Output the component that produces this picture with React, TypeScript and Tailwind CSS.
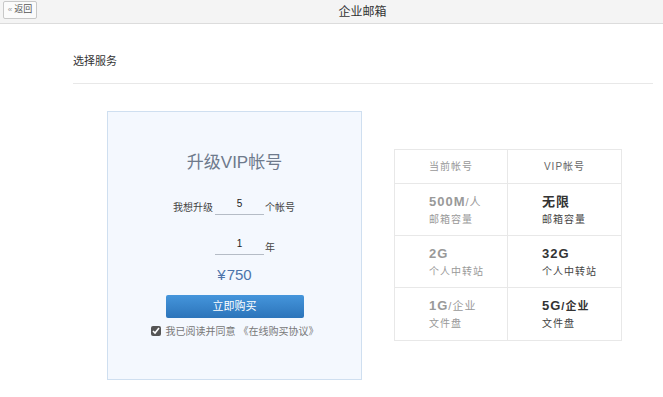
import { useState } from 'react';

const font = {
  fontFamily: '"Liberation Sans", "Noto Sans CJK SC", sans-serif',
};

const rows = [
  { cur: '500M', curUnit: '/人', vip: '无限', vipUnit: '', label: '邮箱容量' },
  { cur: '2G', curUnit: '', vip: '32G', vipUnit: '', label: '个人中转站' },
  { cur: '1G', curUnit: '/企业', vip: '5G', vipUnit: '/企业', label: '文件盘' },
];

export default function App() {
  const [count, setCount] = useState('5');
  const [years, setYears] = useState('1');
  const [agreed, setAgreed] = useState(true);

  return (
    <div className="min-h-[397px] w-full bg-white" style={font}>
      {/* top bar */}
      <div className="relative flex h-[24px] items-center justify-center border-b border-[#dcdcdc] bg-[#f4f4f4]">
        <button className="absolute left-[3px] top-[1px] flex h-[18px] w-[34px] items-center justify-center rounded-[2px] border border-[#c8c8c8] bg-[#fbfbfb] text-[9px] text-[#555]">
          <span className="mr-[2px] text-[8px] text-[#999]">«</span>返回
        </button>
        <span className="ml-[62px] text-[12px] text-[#333]">企业邮箱</span>
      </div>

      <div className="pl-[73px] pr-[10px]">
        <div className="border-b border-[#e8e8e8] pb-[13px] pt-[29px] text-[11px] text-[#333]">
          选择服务
        </div>
      </div>

      <div className="flex items-start pl-[107px] pt-[27px]">
        {/* purchase card */}
        <div className="flex h-[269px] w-[255px] flex-col items-center border border-[#cfdff0] bg-[#f4f8fe]">
          <div className="mt-[39px] text-[17px] leading-[24px] text-[#6e7a8c]">升级VIP帐号</div>

          <div className="mt-[22px] flex w-full flex-col gap-[22px] pl-[65px]">
            <div className="flex items-end text-[10px] text-[#444]">
              <span className="w-[42px] leading-[14px]">我想升级</span>
              <input
                value={count}
                onChange={(e) => setCount(e.target.value)}
                className="h-[18px] w-[49px] border-b border-[#b5bcc6] bg-transparent pb-[4px] text-center text-[10px] text-[#222] outline-none"
              />
              <span className="ml-[1px] leading-[14px]">个帐号</span>
            </div>
            <div className="flex items-end text-[10px] text-[#444]">
              <span className="w-[42px]" />
              <input
                value={years}
                onChange={(e) => setYears(e.target.value)}
                className="h-[18px] w-[49px] border-b border-[#b5bcc6] bg-transparent pb-[4px] text-center text-[10px] text-[#222] outline-none"
              />
              <span className="ml-[1px] leading-[14px]">年</span>
            </div>
          </div>

          <div className="mt-[10px] text-[15px] leading-[20px] text-[#4d74aa]">
            ¥<span className="ml-[1px]">750</span>
          </div>

          <button className="mt-[10px] h-[23px] w-[138px] rounded-[2px] bg-gradient-to-b from-[#4596dc] to-[#2c74ba] text-[11px] text-white">
            立即购买
          </button>

          <label className="mt-[6px] flex items-center text-[10px] text-[#777]">
            <input
              type="checkbox"
              checked={agreed}
              onChange={(e) => setAgreed(e.target.checked)}
              className="mr-[5px] h-[10px] w-[10px] accent-[#555]"
            />
            我已阅读并同意 《在线购买协议》
          </label>
        </div>

        {/* comparison table */}
        <div className="ml-[32px] mt-[38px] w-[228px] border border-[#e8e8e8] tracking-[1px]">
          <div className="flex h-[34px] items-center border-b border-[#e8e8e8] text-[10px]">
            <div className="flex h-full w-[113px] items-center justify-center border-r border-[#e8e8e8] text-[#999]">
              当前帐号
            </div>
            <div className="flex-1 text-center text-[#666]">VIP帐号</div>
          </div>
          {rows.map((r, i) => (
            <div
              key={r.label}
              className={`flex h-[52px] ${i < rows.length - 1 ? 'border-b border-[#e8e8e8]' : ''}`}
            >
              <div className="w-[113px] border-r border-[#e8e8e8] pl-[34px] pt-[9px] text-[#999]">
                <div className="text-[13px] font-bold leading-[18px]">
                  {r.cur}
                  <span className="text-[11px] font-normal">{r.curUnit}</span>
                </div>
                <div className="text-[10px] leading-[17px]">{r.label}</div>
              </div>
              <div className="flex-1 pl-[34px] pt-[9px] text-[#333]">
                <div className="text-[13px] font-bold leading-[18px]">
                  {r.vip}
                  <span className="text-[11px]">{r.vipUnit}</span>
                </div>
                <div className="text-[10px] leading-[17px] text-[#444]">{r.label}</div>
              </div>
            </div>
          ))}
        </div>
      </div>
    </div>
  );
}
